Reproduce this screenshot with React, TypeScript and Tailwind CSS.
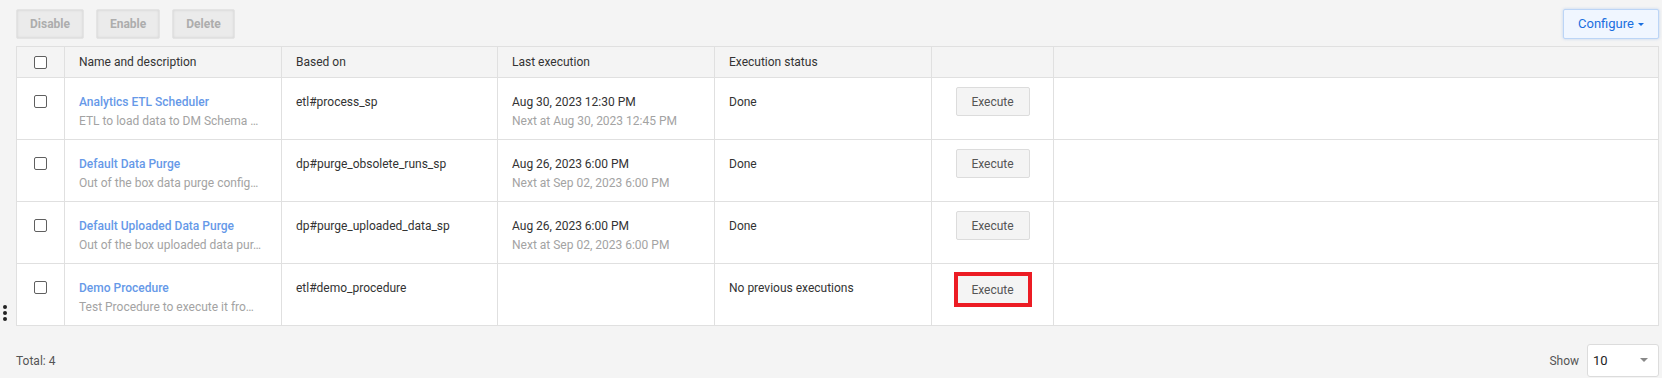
type Row = {
  name: string;
  desc: string;
  basedOn: string;
  last?: string;
  next?: string;
  status: string;
  highlight?: boolean;
};

const rows: Row[] = [
  {
    name: "Analytics ETL Scheduler",
    desc: "ETL to load data to DM Schema …",
    basedOn: "etl#process_sp",
    last: "Aug 30, 2023 12:30 PM",
    next: "Next at Aug 30, 2023 12:45 PM",
    status: "Done",
  },
  {
    name: "Default Data Purge",
    desc: "Out of the box data purge config…",
    basedOn: "dp#purge_obsolete_runs_sp",
    last: "Aug 26, 2023 6:00 PM",
    next: "Next at Sep 02, 2023 6:00 PM",
    status: "Done",
  },
  {
    name: "Default Uploaded Data Purge",
    desc: "Out of the box uploaded data pur…",
    basedOn: "dp#purge_uploaded_data_sp",
    last: "Aug 26, 2023 6:00 PM",
    next: "Next at Sep 02, 2023 6:00 PM",
    status: "Done",
  },
  {
    name: "Demo Procedure",
    desc: "Test Procedure to execute it fro…",
    basedOn: "etl#demo_procedure",
    status: "No previous executions",
    highlight: true,
  },
];

function Checkbox() {
  return <div className="w-[13px] h-[13px] border border-[#5f5f5f] rounded-[2px] bg-white" />;
}

export default function App() {
  return (
    <div className="w-[1662px] h-[378px] bg-[#f4f4f4] font-['Roboto',sans-serif] text-[12px] text-[#333] relative overflow-hidden">
      {/* toolbar */}
      <div className="flex items-center justify-between pl-4 pr-[3px] pt-[9px]">
        <div className="flex gap-3">
          {["Disable", "Enable", "Delete"].map((b) => (
            <button
              key={b}
              className="h-[30px] px-[13px] bg-[#ebebeb] rounded-[2px] font-bold text-[#adadad] shadow-[inset_0_0_3px_rgba(0,0,0,0.12)] border border-[#e4e4e4]"
            >
              {b}
            </button>
          ))}
        </div>
        <button className="h-[30px] w-[96px] flex items-center justify-center gap-1 bg-[#f0f6ff] border border-[#bcd5f6] rounded-[2px] text-[#1a6fe0] text-[13px] shadow-[0_0_3px_rgba(26,111,224,0.25)]">
          Configure
          <svg width="6" height="4" viewBox="0 0 6 4" className="mt-[1px]">
            <path d="M0 0h6L3 3z" fill="#1a6fe0" />
          </svg>
        </button>
      </div>

      {/* table */}
      <div className="pl-4 pr-[3px] mt-[7px]">
        <table className="w-full border-collapse border border-[#e0e0e0] table-fixed">
          <colgroup>
            <col className="w-[48px]" />
            <col className="w-[217px]" />
            <col className="w-[216px]" />
            <col className="w-[217px]" />
            <col className="w-[217px]" />
            <col className="w-[122px]" />
            <col />
          </colgroup>
          <thead>
            <tr className="h-[31px] bg-[#f4f4f4]">
              <th className="border border-[#e0e0e0] font-normal">
                <div className="flex justify-center">
                  <Checkbox />
                </div>
              </th>
              <th className="border border-[#e0e0e0] font-normal text-left px-[14px]">Name and description</th>
              <th className="border border-[#e0e0e0] font-normal text-left px-[14px]">Based on</th>
              <th className="border border-[#e0e0e0] font-normal text-left px-[14px]">Last execution</th>
              <th className="border border-[#e0e0e0] font-normal text-left px-[14px]">Execution status</th>
              <th className="border border-[#e0e0e0]" />
              <th className="border border-[#e0e0e0]" />
            </tr>
          </thead>
          <tbody>
            {rows.map((r) => (
              <tr key={r.name} className="h-[62px] bg-white">
                <td className="border border-[#e0e0e0] align-top pt-[17px]">
                  <div className="flex justify-center">
                    <Checkbox />
                  </div>
                </td>
                <td className="border border-[#e0e0e0] align-top px-[14px] pt-[17px]">
                  <div className="font-medium text-[#6699e8] leading-[14px]">{r.name}</div>
                  <div className="text-[#a3a3a3] leading-[14px] mt-[5px] whitespace-nowrap">{r.desc}</div>
                </td>
                <td className="border border-[#e0e0e0] align-top px-[14px] pt-[17px] leading-[14px]">{r.basedOn}</td>
                <td className="border border-[#e0e0e0] align-top px-[14px] pt-[17px]">
                  {r.last && <div className="leading-[14px]">{r.last}</div>}
                  {r.next && <div className="text-[#a3a3a3] leading-[14px] mt-[5px]">{r.next}</div>}
                </td>
                <td className="border border-[#e0e0e0] align-top px-[14px] pt-[17px] leading-[14px]">{r.status}</td>
                <td className="border border-[#e0e0e0] align-top pt-[9px]">
                  <div className="flex justify-center">
                    {r.highlight ? (
                      <div className="border-[4px] border-[#ec1c24] -mt-[1px]">
                        <button className="h-[27px] w-[70px] bg-[#f4f4f4] text-[#555]">Execute</button>
                      </div>
                    ) : (
                      <button className="h-[29px] w-[74px] bg-[#f4f4f4] border border-[#dcdcdc] rounded-[2px] text-[#555]">
                        Execute
                      </button>
                    )}
                  </div>
                </td>
                <td className="border border-[#e0e0e0]" />
              </tr>
            ))}
          </tbody>
        </table>
      </div>

      {/* footer */}
      <div className="flex items-center justify-between pl-4 pr-[3px] mt-[18px]">
        <span className="text-[#555]">Total: 4</span>
        <div className="flex items-center gap-2">
          <span className="text-[#555]">Show</span>
          <div className="w-[72px] h-[33px] bg-white border border-[#dcdcdc] rounded-[3px] flex items-center justify-between pl-[5px] pr-[10px] text-[13px] text-[#222]">
            <span>10</span>
            <svg width="8" height="5" viewBox="0 0 8 5">
              <path d="M0 0h8L4 4z" fill="#888" />
            </svg>
          </div>
        </div>
      </div>

      {/* side handle */}
      <div className="absolute left-[3px] top-[305px] flex flex-col gap-[2px]">
        <div className="w-[4px] h-[4px] rounded-full bg-[#222]" />
        <div className="w-[4px] h-[4px] rounded-full bg-[#222]" />
        <div className="w-[4px] h-[4px] rounded-full bg-[#222]" />
      </div>
    </div>
  );
}
